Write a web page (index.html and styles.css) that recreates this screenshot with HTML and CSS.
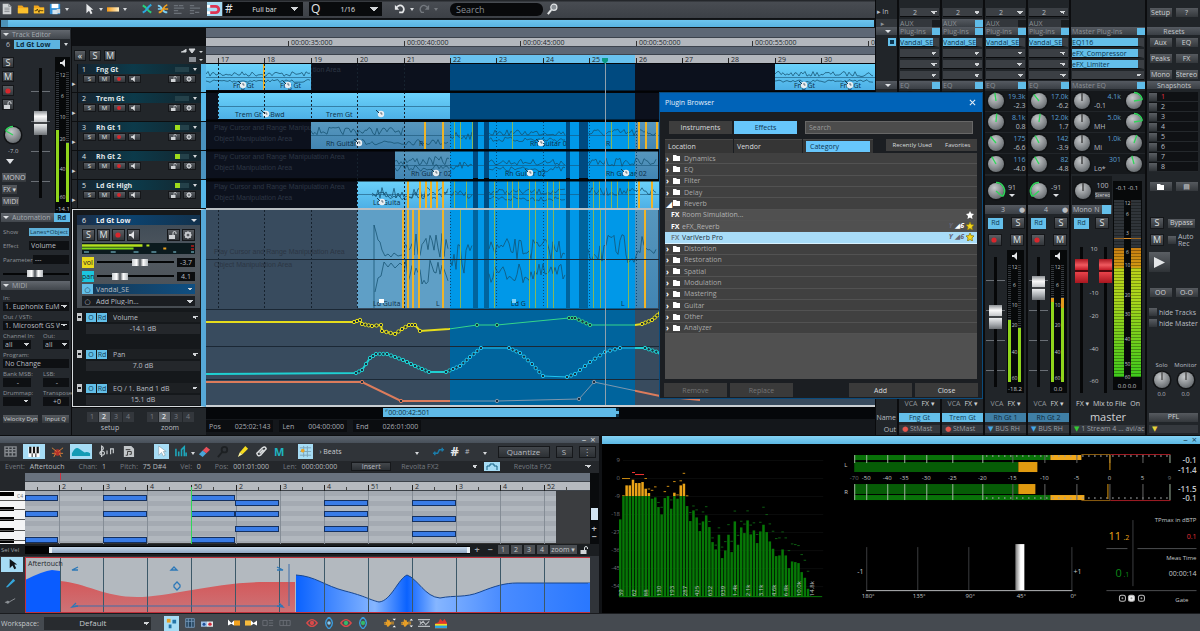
FILE: index.html
```html
<!DOCTYPE html>
<html lang="en">
<head>
<meta charset="utf-8">
<title>Audio Workstation</title>
<link rel="stylesheet" href="styles.css">
</head>
<body>
<svg class="defs" width="0" height="0" aria-hidden="true">
  <defs>
    <radialGradient id="knobFill" cx="40%" cy="30%" r="75%"><stop offset="0" stop-color="#c6c9cb"/><stop offset="1" stop-color="#63686c"/></radialGradient>
    <linearGradient id="clip" x1="0" y1="0" x2="0" y2="1"><stop offset="0" stop-color="#6bd2fa"/><stop offset="1" stop-color="#4db0e6"/></linearGradient>
    <linearGradient id="clipDim" x1="0" y1="0" x2="0" y2="1"><stop offset="0" stop-color="#5797bd"/><stop offset="1" stop-color="#4285b3"/></linearGradient>
    <linearGradient id="level" x1="0" y1="0" x2="0" y2="1"><stop offset="0" stop-color="#c87e12"/><stop offset=".15" stop-color="#d29a12"/><stop offset=".16" stop-color="#b9d21a"/><stop offset=".4" stop-color="#a9d61c"/><stop offset="1" stop-color="#3fc91c"/></linearGradient>
    <linearGradient id="goldBar"><stop offset="0" stop-color="#f59a16"/><stop offset="1" stop-color="#fff0c8"/></linearGradient>
    <symbol id="i-speaker" viewBox="0 0 10 8"><path d="M1 3h2l3-3v8L3 5H1z" fill="#e4e6e8"/></symbol>
    <symbol id="i-gear" viewBox="0 0 10 8"><circle cx="5" cy="4" r="2.4" fill="none" stroke="#c9ccd0" stroke-width="1.6"/><path d="M5 0v8M1 4h8M2 1l6 6M8 1L2 7" stroke="#c9ccd0" stroke-width=".8"/><circle cx="5" cy="4" r="1" fill="#33373c"/></symbol>
    <symbol id="i-lock" viewBox="0 0 10 8"><path d="M1 4h6v4H1z" fill="#d0d3d6"/><path d="M5 4V2a1.5 1.5 0 0 1 3 0v1" fill="none" stroke="#d0d3d6"/></symbol>
    <symbol id="i-rec" viewBox="0 0 10 8"><circle cx="5" cy="4" r="2.6" fill="#d8262c"/></symbol>
    <symbol id="i-folder" viewBox="0 0 8 8"><path d="M0 1h3l1 1h3v5H0z" fill="#fff"/></symbol>
    <symbol id="i-star" viewBox="0 0 10 10"><path d="M5 0l1.5 3.2L10 3.7 7.5 6.2 8.1 10 5 8.2 1.9 10l.6-3.8L0 3.7l3.5-.5z"/></symbol>
    <symbol id="i-wave" viewBox="0 0 12 10"><path d="M0 5l2-1 1 3 1-6 1 8 1-7 1 5 1-3h4M0 6l2 1 1-3 1 5 1-7 1 6 1-4 1 2h4" fill="none" stroke="#f2a526"/></symbol>
  </defs>
</svg>

<div class="upper">
  <main class="main">
    <header class="toolbar">
      <svg class="ico" viewBox="0 0 14 14"><path d="M2 1h7l3 3v9H2z" fill="#cfd2d4"/><path d="M9 1v3h3M4 6h6M4 8h6M4 10h6" fill="none" stroke="#85898d"/></svg>
      <svg class="ico" viewBox="0 0 14 14"><path d="M1 3h5l2 2h5v7H1z" fill="#f2a51c"/><path d="M1 6h12v6H1z" fill="#fbc02d"/></svg>
      <svg class="ico" viewBox="0 0 14 14"><path d="M1 3h5l2 2h5v7H1z" fill="#f2a51c"/><path d="M1 6h12v6H1z" fill="#fbc02d"/><path d="M2 9h2l1-2 2 4 1-3 1 1h3" fill="none" stroke="#4a3206"/></svg>
      <svg class="ico" viewBox="0 0 14 14"><path d="M1 1h12v12H1z" fill="#2f8ed6"/><path d="M3 1h8v5H3z" fill="#fff"/><path d="M4 8h6v5H4z" fill="#d3e4ef"/><path d="M9 7h4v5H9z" fill="#cfd6db"/></svg>
      <i class="caret"></i>
      <svg class="ico gap" viewBox="0 0 14 14"><path d="M4 1v11l3-3 2 4 2-1-2-4h3z" fill="#e8eaec"/></svg>
      <i class="caret"></i>
      <svg class="ico" viewBox="0 0 14 14"><rect y="5" width="14" height="5" fill="url(#goldBar)"/></svg>
      <i class="caret"></i>
      <svg class="ico gap" viewBox="0 0 14 14"><path d="M2 3q3 1 5 4t5 4" fill="none" stroke="#27d07c" stroke-width="2.4"/><path d="M12 2q-3 2-5 5t-5 4" fill="none" stroke="#2ba7df" stroke-width="2.4"/></svg>
      <svg class="ico" viewBox="0 0 14 14"><path d="M1 3q3 0 5 4t6 4M1 7h5" fill="none" stroke="#7cd0f5" stroke-width="2"/><path d="M12 2q-3 1-5 5t-5 4M8 7h5" fill="none" stroke="#f2a11e" stroke-width="2"/></svg>
      <svg class="ico" viewBox="0 0 14 14"><path d="M1 3h5M1 6h12M1 9h5M7 3h5M1 12h9" stroke="#6b7178" stroke-width="1.4"/></svg>
      <svg class="ico" viewBox="0 0 14 14"><path d="M1 3h5M1 6h12M1 9h5M7 11h5M1 12h5" stroke="#6b7178" stroke-width="1.4"/></svg>
      <button class="ico lit" aria-label="Snap"><svg viewBox="0 0 14 14"><path d="M2 4h6a3 3 0 0 1 0 6H2" fill="none" stroke="#dd3453" stroke-width="2.6"/><path d="M0 4h3M0 10h3" stroke="#fff" stroke-width="2.6"/></svg></button>
      <label class="combo"><b>#</b><select aria-label="Grid"><option>Full bar</option></select></label>
      <label class="combo q"><b>Q</b><select aria-label="Quantize"><option>1/16</option></select></label>
      <svg class="ico undo" viewBox="0 0 14 14"><path d="M3 5q4-4 7-1t0 7H6" fill="none" stroke="#e6e8ea" stroke-width="2"/><path d="M1 2v6h5z" fill="#e6e8ea"/></svg>
      <i class="caret"></i>
      <svg class="ico" viewBox="0 0 14 14"><path d="M11 5Q7 1 4 4t0 7h3" fill="none" stroke="#73787e" stroke-width="1.6"/><path d="M13 2v6H8z" fill="#73787e"/></svg>
      <i class="caret dim"></i>
      <input class="search" type="text" placeholder="Search" aria-label="Search">
      <svg class="ico" viewBox="0 0 14 14"><circle cx="8" cy="5" r="3.6" fill="#8a9096" stroke="#dfe2e4" stroke-width="1.4"/><path d="M5 8l-4 5" stroke="#dfe2e4" stroke-width="2.4"/></svg>
    </header>
    <div class="overview"></div>
    <div class="workspace">
      <aside class="inspector">
        <h2 class="bar"><i class="tri"></i>Track Editor</h2>
        <div class="current"><span>6</span><strong>Ld Gt Low</strong><i class="caret"></i></div>
        <div class="channel">
          <div class="chan-buttons">
            <button class="key">S</button><button class="key">M</button>
            <button class="key" aria-label="Record"><svg viewBox="0 0 10 8"><use href="#i-rec"/></svg></button>
            <button class="key" aria-label="Lock"><svg viewBox="0 0 10 8"><use href="#i-lock"/></svg></button>
            <div class="pan" data-knob="-60,1"></div>
            <small>-7.0</small>
            <i class="tri big"></i>
            <button class="tag">MONO</button><button class="tag">FX ▾</button><button class="tag">MIDI</button>
          </div>
          <input class="fader tall" type="range" value="59" aria-label="Track volume">
          <svg class="tmeter" id="track-meter" aria-hidden="true"></svg>
        </div>
        <h2 class="bar"><i class="tri"></i>Automation<em>Rd</em></h2>
        <div class="form auto">
          <label>Show<button class="lit-btn">Lanes+Object</button></label>
          <label>Effect<input value="Volume"></label>
          <label>Parameter<input value="---"></label>
          <input class="hs" type="range" value="48" aria-label="Parameter value">
        </div>
        <h2 class="bar"><i class="tri"></i>MIDI</h2>
        <div class="form midi-form">
          <label class="stack">In:<select><option>1. Euphonix EuMIDI</option></select></label>
          <label class="stack">Out / VSTi:<select><option>1. Microsoft GS Wavetable</option></select></label>
          <div class="pair"><label class="stack">Channel In:<select><option>all</option></select></label><label class="stack">Out:<select><option>all</option></select></label></div>
          <label class="stack">Program:<input value="No Change"></label>
          <div class="pair"><label class="stack">Bank MSB:<input class="c" value="-"></label><label class="stack">LSB:<input class="c" value="-"></label></div>
          <div class="pair"><label class="stack">Drummap:<select><option></option></select></label><label class="stack">Transpose<input class="c" value="+0"></label></div>
          <div class="pair btns"><button class="tag">Velocity Dyn</button><button class="tag">Input Q</button></div>
        </div>
      </aside>

      <section class="tracks">
        <div class="blank"></div>
        <div class="track-tools"><button class="key">«</button><button class="key">S</button><button class="key">M</button>
          <svg viewBox="0 0 24 14"><path d="M1 4h5v-3M9 1h6l-3 4z" fill="#d2d5d8" stroke="#d2d5d8"/><path d="M9 9h7v5H9z" fill="#8a8f95"/><path d="M19 3h4l-2 2zM19 11h4l-2 2z" fill="#d2d5d8"/></svg></div>
        <div id="track-list"></div>
        <div class="sel-track">
          <div class="inner">
            <div class="sel-head"><span>6</span><b>Ld Gt Low</b><i class="tri"></i></div>
            <div class="sel-keys"><button class="key">S</button><button class="key">M</button><button class="key" aria-label="Record"><svg viewBox="0 0 10 8"><use href="#i-rec"/></svg></button><button class="key" aria-label="Monitor"><svg viewBox="0 0 10 8"><use href="#i-speaker"/></svg></button><button class="key push" aria-label="Lock"><svg viewBox="0 0 10 8"><use href="#i-lock"/></svg></button><button class="key" aria-label="Settings"><svg viewBox="0 0 10 8"><use href="#i-gear"/></svg></button></div>
            <svg class="hmeter" viewBox="0 0 114 11" preserveAspectRatio="none"><rect width="114" height="11" fill="#0b1a1e"/><path d="M0 2.5h61" stroke="#b4e01e" stroke-width="2.4"/><path d="M0 5.5h52" stroke="#7fd61a" stroke-width="2"/><path d="M65 2.5h3" stroke="#b4e01e" stroke-width="2"/><path d="M82 5.5h3" stroke="#e8a020" stroke-width="2"/><path d="M110 3h3M110 6h3" stroke="#8a1c1c" stroke-width="2"/><path d="M2 9h5M29 9h5M52 9h5M70 9h5M92 9h3M110 9h3" stroke="#5f97a5" stroke-width="1.4"/></svg>
            <label class="vrow"><span class="y">vol</span><input class="hs" type="range" value="58"><output>-3.7</output></label>
            <label class="vrow"><span class="cy">pan</span><input class="hs" type="range" value="24"><output>4.1</output></label>
            <div class="plug on"><button aria-label="Power">○</button><select aria-label="Plug-in 1"><option>Vandal_SE</option></select></div>
            <div class="plug"><button aria-label="Power">○</button><select aria-label="Plug-in 2"><option>Add Plug-in...</option></select></div>
          </div>
          <div class="lane"><div class="lane-top"><i class="grip"></i><button>O</button><button>Rd</button><select aria-label="Lane 1"><option>Volume</option></select></div><output>-14.1 dB</output></div>
          <div class="lane"><div class="lane-top"><i class="grip"></i><button>O</button><button>Rd</button><select aria-label="Lane 2"><option>Pan</option></select></div><output>7.0 dB</output></div>
          <div class="lane last"><div class="lane-top"><i class="grip"></i><button>O</button><button>Rd</button><select aria-label="Lane 3"><option>EQ /  1. Band 1 dB</option></select></div><output>15.1 dB</output></div>
        </div>
        <div class="setups">
          <div><div class="nums"><button>1</button><button class="on">2</button><button>3</button><button>4</button></div>setup</div>
          <div><div class="nums"><button>1</button><button class="on">2</button><button>3</button><button>4</button></div>zoom</div>
        </div>
      </section>

      <section class="arranger">
        <svg id="timeline"></svg>
        <div class="hscroll"><span>⌜00:00:42:501</span></div>
        <div class="status"><p><span>Pos</span><span>025:02:143</span></p><p><span>Len</span><span>004:00:000</span></p><p><span>End</span><span>026:01:000</span></p></div>
      </section>
    </div>
  </main>
  <aside class="mixer" id="mixer"></aside>
</div>

<div class="lower">
  <section class="midi">
    <div class="win-title"><span>–</span><span>×</span></div>
    <div class="mtools">
      <svg class="ico" viewBox="0 0 14 14"><path d="M1 2h12v10H1zM1 5h12M1 8h12M5 2v10M9 2v10" fill="none" stroke="#85898e" stroke-width="1.5"/></svg>
      <button class="mbtn lit w" aria-label="Piano roll"><svg viewBox="0 0 14 14"><path d="M1 2h12v11H1z" fill="#fff"/><path d="M3 2v7M7 2v7M11 2v7" stroke="#111" stroke-width="2.4"/><path d="M5 9v4M9 9v4" stroke="#111"/></svg></button>
      <svg class="ico" viewBox="0 0 14 14"><circle cx="7" cy="8" r="3.5" fill="#b5312a"/><path d="M1 3l5 4M13 3L8 7M3 13l2-4M11 13L9 9M1 9h3M10 9h3" stroke="#d8863a"/></svg>
      <button class="mbtn lit w" aria-label="Controller"><svg viewBox="0 0 22 14"><path d="M1 12V9q4-8 8-5t6 4q3-1 6 1v3z" fill="#149bb5"/></svg></button>
      <svg class="ico w" viewBox="0 0 20 14"><path d="M4 13V1q4 2 0 5t0 5q4 0 3-3T2 9M10 10V6M14 10V4h3v5" fill="none" stroke="#c9cdd0" stroke-width="1.3"/></svg>
      <svg class="ico" viewBox="0 0 14 14"><path d="M2 1h8l3 3v9H2z" fill="#c3c7ca"/><path d="M4 5h5M6 11V7h4v3M4 11h2M8 10h2" fill="none" stroke="#333"/></svg>
      <button class="mbtn lit push" aria-label="Select"><svg viewBox="0 0 14 14"><path d="M4 1v10l3-3 2 4 2-1-2-4h3z" fill="#fff" stroke="#8094a0" stroke-width=".6"/></svg></button>
      <svg class="ico" viewBox="0 0 14 14"><path d="M1 12V4M4 12V7M7 12V5l3-3v10M12 12V8" stroke="#1ea7bb" stroke-width="1.7" fill="none"/></svg><i class="caret"></i>
      <svg class="ico" viewBox="0 0 14 14"><path d="M1 10l4-4 4 3-4 4z" fill="#49a6d8"/><path d="M5 6l4-4 4 3-4 4z" fill="#e8505b"/></svg>
      <svg class="ico" viewBox="0 0 14 14"><circle cx="8" cy="5" r="3" fill="none" stroke="#1d2023" stroke-width="2"/><path d="M6 7l-5 6" stroke="#1d2023" stroke-width="2"/></svg>
      <svg class="ico" viewBox="0 0 14 14"><path d="M4 8l6-7 3 3-6 6z" fill="#f7dc1e"/><path d="M4 8l3 2-5 3z" fill="#fff6a0"/></svg>
      <svg class="ico" viewBox="0 0 14 14"><path d="M2 9l6-6q3-2 4 1L6 11q-3 2-4-2zM5 9l4-4" fill="none" stroke="#dcdfe1" stroke-width="1.6"/></svg>
      <b class="m">M</b>
      <button class="mbtn lit grid-ic" aria-label="Grid"><svg viewBox="0 0 14 14"><path d="M1 3h12M1 7h12M1 11h12M5 1v12M9 1v12" stroke="#7aa3b8"/><circle cx="4" cy="6" r="2" fill="#e9a529"/></svg></button>
      <span class="beats">› Beats</span><i class="caret"></i>
      <svg class="ico track-ic" viewBox="0 0 14 14"><path d="M1 9h5l2-4h5M3 7v4M11 3v4" stroke="#1c7ba8" stroke-width="1.6" fill="none"/></svg>
      <b>#</b><span class="hash">#</span><i class="caret"></i>
      <button class="flat quant">Quantize</button><button class="flat">S</button><button class="flat">⋮</button>
    </div>
    <div class="minfo">
      <span>Event: <b>Aftertouch</b></span><span>Chan: <b>1</b></span><span>Pitch: <b>75 D#4</b></span><span>Vel: <b>0</b></span><span>Pos: <b>001:01:000</b></span><span>Len: <b>000:00:000</b></span>
      <button class="flat">Insert</button>
      <select aria-label="Instrument"><option>Revolta FX2</option></select><button class="mbtn lit small" aria-label="Editor"><svg viewBox="0 0 14 8"><path d="M2 7V3h3V1h4v2h3v4" fill="none" stroke="#146083"/></svg></button><select aria-label="Output"><option>Revolta FX2</option></select>
    </div>
    <div class="roll">
      <svg class="keys" id="keys"></svg>
      <svg class="notes" id="notes"></svg>
      <div class="vscroll"><i></i><b>+</b><b>−</b></div>
    </div>
    <div class="rollbar"><small>Sel Vel</small><span class="track"><i></i></span><b>+</b><b>−</b><button>1</button><button>2</button><button>3</button><button>4</button><button class="z">zoom ▾</button><svg viewBox="0 0 10 8"><use href="#i-lock"/></svg></div>
    <div class="ctl">
      <div class="ctl-tools"><button class="mbtn lit" aria-label="Select"><svg viewBox="0 0 14 14"><path d="M4 1v10l3-3 2 4 2-1-2-4h3z" fill="#10161b"/></svg></button><svg viewBox="0 0 14 14"><path d="M2 12l8-9 2 2-8 7z" fill="#35a7dd"/></svg><svg viewBox="0 0 14 14"><path d="M1 10h4l7-4" fill="none" stroke="#8b9095"/><circle cx="4" cy="10" r="1.6" fill="#8b9095"/></svg></div>
      <svg class="curve" id="curve"></svg>
    </div>
  </section>
  <section class="analyzer">
    <div class="win-title blue"><span>–</span><span>×</span></div>
    <svg id="scope" viewBox="601 442 598 169"></svg>
  </section>
</div>

<footer class="foot">
  <label for="ws">Workspace:</label><select id="ws"><option>Default</option></select>
  <button class="mbtn lit" aria-label="Arranger view"><svg viewBox="0 0 14 14"><path d="M2 2h4v4H2z" fill="#e6a022"/><path d="M8 3h4v4H8zM4 8h3v4H4z" fill="#2274a8"/></svg></button>
  <svg class="ico" viewBox="0 0 14 14"><path d="M2 2h10v10H2zM2 5h10M5 2v10M9 2v10" fill="#24435c" stroke="#7b9ec0"/></svg>
  <svg class="ico" viewBox="0 0 16 14"><rect y="5" width="8" height="7" fill="#9fc2e8"/><rect x="8" y="5" width="8" height="7" fill="#e5e7e9"/><circle cx="4" cy="8.500" r="2" fill="#204f99"/><circle cx="12" cy="8.500" r="2.300" fill="#d62b3a"/></svg>
  <svg class="ico gap" viewBox="0 0 14 14"><path d="M0 3l4 4 3-3v6l-3-2-4 2z" fill="#fff"/><path d="M7 4h7v6H7z" fill="#f2a11e"/></svg>
  <svg class="ico" viewBox="0 0 14 14"><path d="M0 4h7v6H0z" fill="#f7bb3d"/><path d="M7 4l3 3 4-3v6l-4-2-3 2z" fill="#fff"/></svg>
  <svg class="ico" viewBox="0 0 14 14"><path d="M1 4h5v6H1zM8 4h5M8 7h5M8 10h5" fill="none" stroke="#6d7278"/></svg>
  <svg class="ico" viewBox="0 0 14 14"><path d="M1 4h12v6H1zM5 4v6M9 4v6" fill="none" stroke="#6d7278"/></svg>
  <svg class="ico gap" viewBox="0 0 14 14"><path d="M1 7q6-8 12 0-6 8-12 0z" fill="none" stroke="#d84a4a" stroke-width="1.6"/><circle cx="7" cy="7" r="2.500" fill="#d84a4a"/></svg>
  <svg class="ico" viewBox="0 0 14 14"><path d="M7 0q8 7 0 14Q-1 7 7 0z" fill="none" stroke="#3a9bdc" stroke-width="1.6"/><circle cx="7" cy="7" r="2" fill="#8ccdf2"/></svg>
  <svg class="ico" viewBox="0 0 14 14"><path d="M1 7q6-8 12 0-6 8-12 0z" fill="none" stroke="#d84a4a" stroke-width="1.6"/><circle cx="7" cy="7" r="2.500" fill="#36b86a"/></svg>
  <svg class="ico" viewBox="0 0 14 14"><path d="M7 0q8 7 0 14Q-1 7 7 0z" fill="none" stroke="#3a9bdc" stroke-width="1.6"/><circle cx="7" cy="7" r="2.500" fill="#36b86a"/></svg>
  <svg class="ico gap" viewBox="0 0 14 14"><use href="#i-wave" y="2" width="12" height="10"/><path d="M10 2h4l-2 2zM10 12h4l-2-2z" fill="#fff"/></svg>
  <svg class="ico" viewBox="0 0 14 14"><use href="#i-wave" y="2" width="12" height="10"/><path d="M10 4h4l-2-2zM10 10h4l-2 2z" fill="#fff"/></svg>
  <svg class="ico" viewBox="0 0 14 14"><path d="M0 3h14M0 11h14M2 9l4-4 3 4 4-4M2 5l4 4" fill="none" stroke="#b9bdc1" stroke-width="1.3"/></svg>
  <svg class="ico" viewBox="0 0 14 14"><path d="M0 13V8l4-2 2-4 3 3 2-3 3 5v6z" fill="#e0362c"/><path d="M0 13V8h14v5z" fill="#f5dc1f"/><path d="M0 13v-3h14v3z" fill="#2aa4e0"/></svg>
</footer>

<div class="dialog" role="dialog" aria-labelledby="dlg-title">
  <header><h1 id="dlg-title">Plugin Browser</h1><button class="x" aria-label="Close dialog"><svg viewBox="0 0 8 8"><path d="M1 1l6 6M7 1L1 7" stroke="#e4eef7" stroke-width="1.2"/></svg></button></header>
  <div class="tabs"><button>Instruments</button><button class="on">Effects</button><input type="text" placeholder="Search" aria-label="Search plug-ins"></div>
  <div class="heads"><button>Location</button><button>Vendor</button><button class="cat"><span>Category</span></button><div><button>Recently Used</button><button>Favorites</button></div></div>
  <div class="listbox"><ul id="plugins"></ul></div>
  <div class="actions"><button disabled>Remove</button><button disabled>Replace</button><span></span><button>Add</button><button>Close</button></div>
</div>
<script src="app.js"></script>
</body>
</html>
```
FILE: styles.css
```css
* { box-sizing: border-box; margin: 0; padding: 0; }
body { min-height: 100vh; display: flex; flex-direction: column; position: relative; background: #17191d; color: #b9bdc2; font: 7px/1 "Open Sans", "DejaVu Sans", sans-serif; overflow: hidden; }
button, input, select, output { font: inherit; color: inherit; border: 0; border-radius: 0; background: none; min-width: 0; }
select, input { appearance: none; }
h2 { font-size: 7px; font-weight: 400; }
svg { display: block; }
svg text { font-family: "Open Sans", sans-serif; font-size: 7px; }
i { font-style: normal; }
.defs { position: absolute; }

select { background-image: linear-gradient(45deg, transparent 50%, #d0d3d6 50%), linear-gradient(-45deg, transparent 50%, #d0d3d6 50%); background-size: 3px 3px; background-position: right 5px center, right 2px center; background-repeat: no-repeat; padding-right: 9px; overflow: hidden; white-space: nowrap; text-overflow: clip; }
.caret { width: 0; height: 0; border: 2px solid transparent; border-top: 3px solid #d5d8db; border-bottom: 0; flex: none; }
.tri { width: 0; height: 0; border: 3px solid transparent; border-top: 3px solid #dfe2e5; border-bottom: 0; flex: none; }
.tri.big { border-width: 4px; border-top-width: 5px; border-bottom: 0; margin: 8px 0; }
.dim { opacity: .35; }

.upper { display: flex; flex: 1; }
.main { flex: 1; min-width: 0; display: flex; flex-direction: column; }

/* toolbar */
.toolbar { height: 19px; display: flex; align-items: center; gap: 4px; padding-left: 1px; background: linear-gradient(#24272b 0 1px, #484c52 2px, #3c4046); border-bottom: 1px solid #101215; }
.ico { width: 12px; height: 12px; flex: none; }
.ico.gap { margin-left: 10px; }
.ico.undo { margin-left: 8px; }
.lit { background: #a6dcf5; }
button.ico.lit { width: 15px; height: 14px; margin-left: 2px; }
.combo { display: flex; align-items: center; gap: 4px; height: 14px; width: 80px; margin-left: -3px; padding: 0 2px; background: #090b0d; color: #e2e4e6; }
.combo b { font-size: 12px; font-weight: 400; }
.combo select { flex: 1; height: 12px; text-align-last: center; background-size: 4px 4px; background-position: right 6px center, right 2px center; }
.combo.q { width: 73px; margin-left: 2px; }
.search { width: 93px; height: 13px; border-radius: 6px; padding: 0 6px; margin-left: 8px; background: #08090b; font-size: 9px; color: #8d9298; }
::placeholder { color: #868b91; opacity: 1; }
.overview { height: 9px; background: linear-gradient(#6cc4ee, #58b2e0); border: 1px solid #14171a; box-shadow: inset 7px 0 #4c92b8; }

.workspace { display: flex; flex: 1; background: #1c1f23; }

/* inspector */
.inspector { flex: 0 0 72px; width: 72px; min-width: 0; padding: 2px 1px 0; border-right: 1px solid #0c0d0f; background: #24282d; display: flex; flex-direction: column; }
.bar { height: 9px; display: flex; align-items: center; gap: 3px; padding-left: 2px; background: linear-gradient(#62676e, #41464c); color: #a6abb1; }
.bar em { margin-left: auto; width: 18px; height: 9px; background: #5fb9e6; color: #12364c; font-style: normal; font-weight: 700; text-align: center; line-height: 9px; }
.current { height: 11px; display: flex; align-items: center; gap: 4px; padding-left: 5px; }
.current strong { width: 46px; height: 9px; line-height: 9px; background: #5db4e0; color: #0d2c40; padding-left: 2px; }
.channel { height: 163px; display: flex; padding: 7px 0 0 1px; }
.chan-buttons { width: 24px; display: flex; flex-direction: column; align-items: flex-start; gap: 3px; flex: none; }
.chan-buttons .pan { margin: 12px 0 0; }
.chan-buttons small { font-size: 6px; padding-left: 6px; }
.key { width: 12px; height: 11px; font-size: 9px; line-height: 10px; color: #dfe1e3; background: linear-gradient(#5a5e63, #33373b); border: 1px solid #15171a; flex: none; }
.key svg { width: 10px; height: 8px; }
.chan-buttons .tri.big { margin: 2px 4px 6px; }
.tag { height: 9px; line-height: 8px; padding: 0 2px; font-size: 7px; background: linear-gradient(#565a5f, #34383c); color: #cfd2d5; white-space: nowrap; overflow: hidden; }
.chan-buttons .tag { padding: 0 1px; }
.fader { writing-mode: vertical-lr; direction: rtl; width: 19px; background: linear-gradient(#060708, #060708) center/3px 100% no-repeat, repeating-linear-gradient(transparent 0 23px, #6a6f75 23px 24px, transparent 24px 30px) center/17px 100%; }
.fader::-webkit-slider-thumb { appearance: none; width: 13px; height: 24px; background: linear-gradient(#8e9296, #fafafa 22%, #c4c7ca 46%, #3c3f42 48% 52%, #eceeef 54%, #a9adb1 80%, #6f7377); }
.fader.tall { height: 130px; margin: 11px 1px 0 5px; }
.tmeter { width: 15px; height: 156px; flex: none; margin-left: auto; }
.form label { display: flex; align-items: center; justify-content: space-between; color: #8f949a; font-size: 6px; }
.form input:not(.hs), .form select { height: 9px; font-size: 7px; color: #b9bdc2; background-color: #0e1013; padding-left: 2px; width: 100%; }
.auto { height: 59px; padding: 6px 1px 0 2px; display: flex; flex-direction: column; gap: 5px; }
.form.auto label input { width: 40px; }
.lit-btn { width: 40px; height: 8px; font-size: 6px; background: #5fb0d8; color: #143a50; line-height: 8px; overflow: hidden; }
.midi-form { padding: 5px 1px 0 2px; display: flex; flex-direction: column; gap: 3px; }
.form label.stack { flex-direction: column; align-items: stretch; gap: 0; line-height: 7px; white-space: nowrap; min-width: 0; }
.pair { display: grid; grid-template-columns: 28px 26px; justify-content: space-between; }
.form .c { text-align: center; }
.pair.btns { grid-template-columns: 35px 27px; padding-top: 6px; }
.pair.btns .tag { font-size: 6px; padding: 0; height: 8px; }
.hs { height: 9px; width: 100%; background: linear-gradient(#050607, #050607) center/100% 2px no-repeat; }
.hs::-webkit-slider-thumb { appearance: none; width: 16px; height: 7px; background: linear-gradient(90deg, #c9cdd0, #fff 30%, #5c6166 48% 52%, #fff 70%, #b3b8bc); }

/* track list */
.tracks { flex: 0 0 134px; width: 134px; min-width: 0; background: #23272b; display: flex; flex-direction: column; }
.blank { height: 18px; background: #0e1013; }
.track-tools { height: 18px; display: flex; align-items: center; gap: 3px; padding: 0 2px; }
.track-tools svg { width: 24px; height: 14px; margin-left: auto; }
.trk { height: 29px; display: grid; grid-template-columns: 5px 1fr 5px; border-bottom: 1px solid #0c0e10; }
.trk .body { background: #22262a; border-left: 1px solid #0c0e10; }
.trk .head { height: 10px; display: flex; align-items: center; gap: 10px; padding: 0 4px; background: linear-gradient(90deg, #16232f, #0c3a4a 45%, #13242c); color: #dfe3e6; }
.trk .head .lev { margin-left: auto; width: 14px; height: 5px; background: #24414a; border-left: 5px solid #24414a; }
.trk .head .lev.g { border-left-color: #9ddc1c; }
.trk .head .caret { margin-left: -6px; }
.trk .row { display: flex; gap: 2px; padding: 1px 5px; }
.trk .row .key { width: 13px; height: 8px; font-size: 6px; line-height: 6px; }
.trk .row .key svg { width: 10px; height: 6px; }
.push { margin-left: auto !important; }
.strip-c { background: #57b8ea; }
.trk.d .strip-c { background: #4a93c0; }
.trk .arrow { color: #cfd2d5; align-self: center; padding-top: 10px; }
.sel-track { border: 1px solid #d7dbde; border-right: 5px solid #57a9d8; padding: 5px 1px 0 4px; height: 198px; background: #15181b; }
.inner { background: linear-gradient(#3c4955, #525960 50%, #464c52); padding: 0 5px 2px; display: flex; flex-direction: column; gap: 2px; }
.sel-head { height: 10px; margin: 0 -5px; padding: 0 3px 0 5px; display: flex; align-items: center; gap: 10px; background: linear-gradient(90deg, #1b2c44, #0c4471 40%, #12314c); color: #eceef0; }
.sel-head .tri { margin-left: auto; }
.sel-keys { display: flex; gap: 2px; padding-top: 2px; }
.sel-keys .key { width: 13px; height: 12px; }
.hmeter { width: 100%; height: 11px; }
.vrow { display: flex; align-items: center; gap: 3px; height: 12px; }
.vrow span { width: 12px; height: 11px; line-height: 11px; text-align: center; color: #222; flex: none; }
.y { background: #e9d91c; } .cy { background: #1cc6de; }
.vrow output { width: 18px; height: 9px; line-height: 9px; background: #0b0d0f; text-align: center; flex: none; }
.plug { display: flex; height: 10px; background: #1a1d21; }
.plug button { width: 11px; }
.plug select { flex: 1; padding-left: 3px; }
.plug.on { background: linear-gradient(90deg, #173650, #0f4f82); }
.plug.on button { background: #63bfe8; color: #123; }
.lane { height: 37px; padding-top: 4px; display: flex; flex-direction: column; gap: 2px; }
.lane.last { height: 30px; padding-top: 1px; }
.lane-top { display: flex; gap: 1px; height: 10px; align-items: center; }
.lane-top button { width: 10px; height: 9px; line-height: 9px; background: #63bfe8; color: #12405c; }
.lane-top select { flex: 1; height: 10px; padding-left: 5px; background-color: #1d2023; }
.grip { width: 5px; height: 8px; margin-right: 3px; border: 1px solid #c5c8cb; border-top-width: 3px; border-bottom-width: 3px; }
.lane output { height: 10px; margin-left: 9px; line-height: 10px; text-align: center; background: #24272b; }
.setups { flex: 1; display: flex; justify-content: space-around; align-items: center; border-top: 1px solid #0b0c0e; text-align: center; padding: 0 6px 0 8px; }
.nums { display: flex; gap: 1px; margin-bottom: 2px; }
.nums button { width: 11px; height: 10px; background: #33373c; color: #777c82; }
.nums .on { background: #666b71; color: #fff; }

/* arranger */
.arranger { flex: 1; min-width: 0; background: #14171b; overflow: hidden; }
#timeline { width: 100%; height: 379px; }
.hscroll { height: 12px; background: #05070a; padding: 1px 0 2px 177px; }
.hscroll span { display: block; width: 236px; height: 9px; line-height: 9px; background: #5fb9e6; color: #0e3044; padding-left: 2px; border-right: 3px dotted #0e3044; }
.status { display: flex; gap: 6px; padding: 1px 0 0; }
.status p { display: flex; gap: 14px; height: 12px; align-items: center; padding: 0 3px; background: #0b0d10; color: #a7abb0; }
svg .ghost { fill: #2c3644; font-family: "Liberation Sans", sans-serif; }
.clabel { fill: #0d2e47; }
.rl { fill: #23272d; }
.wv { fill: none; stroke: #14506f; stroke-width: 1; opacity: .75; }

/* mixer */
.mixer { flex: 0 0 325px; display: grid; grid-template-columns: 23px repeat(4, 43px) 76px 1fr; background: #1d2024; border-left: 1px solid #090a0c; }
.strip { display: grid; grid-template-columns: minmax(0, 1fr); grid-template-rows: 17px 10px 8px 46px 8px 87px 29px 9px 18px 15px 1fr 12px 15px 10px; border-right: 2px solid #0b0c0e; background: #212529; overflow: hidden; min-width: 0; }
.strip > * { min-width: 0; }
.s-in { padding: 8px 1px 0; }
.s-in select, .slot { width: 100%; height: 9px; background-color: #3b3f44; border-bottom: 1px solid #0b0c0e; text-align-last: center; }
.hd { display: flex; justify-content: space-between; align-items: center; padding-left: 1px; background: linear-gradient(#555a61, #3a3f45); color: #8b9096; height: 8px; align-self: end; white-space: nowrap; }
.hd.dk { background: #33373c; }
.hd i { width: 8px; height: 7px; background: #60bce8; flex: none; }
.hd .tri { width: 0; height: 0; background: none; margin-left: 8px; }
.hd.dk i { background: #1a1c1f; }
.hd.ct { justify-content: center; color: #c0c4c8; }
.slots { display: flex; flex-direction: column; gap: 2px; padding: 3px 1px 0; }
.slot { display: block; height: 9px; padding-left: 1px; text-align-last: left; }
.slot.on { background-color: #64bfea; color: #0d3650; border-right: 6px solid #3b3f44; background-image: none; padding: 0; }
.power { width: 8px; height: 8px; margin-left: 11px; background: #0d3650; border: 2px solid #64bfea; }
.side-lbl { text-align: right; align-self: center; padding-right: 1px; }
.eqs { display: grid; grid-template-rows: repeat(4, 20px); gap: 1px; padding-top: 2px; }
.eq, .panrow { display: flex; align-items: center; gap: 1px; background: #15181b; }
.eq > div:first-child, .pan { width: 22px; height: 20px; flex: none; }
.eq p { flex: 1; min-width: 0; text-align: right; line-height: 9px; padding-right: 1px; white-space: nowrap; }
.eq p b { font-weight: 400; color: #5a9fd4; display: block; }
.eq p.l { text-align: left; }
.eq p.l b { text-align: right; }
.panrow p { display: flex; flex-direction: column; gap: 3px; align-items: center; min-width: 0; }
.panrow .tag { font-size: 5px; padding: 0; height: 7px; line-height: 7px; }
.num { background: linear-gradient(#555a61, #3a3f45); text-align: center; line-height: 9px; display: flex; justify-content: space-between; padding: 0 1px 0 16px; align-items: center; }
.num.mono { padding-left: 1px; }
.num.mono i { width: 9px; height: 9px; background: #64bfea; }
.duo { display: flex; align-items: center; gap: 8px; padding-left: 3px; min-width: 0; }
.duo .key { width: 14px; height: 12px; }
.rd { width: 15px; height: 11px; background: #64bfea; color: #123c56; line-height: 10px; flex: none; }
.fz { display: flex; gap: 1px; padding: 3px 2px 3px 1px; }
.fz .fader { margin: 7px 0 0; height: 130px; width: 19px; }
.fz svg { width: 17px; height: 143px; margin-left: auto; }
.vga { display: flex; gap: 4px; align-items: center; justify-content: center; color: #8f9499; white-space: nowrap; }
.vga b { font-weight: 400; color: #cdd0d3; }
.vga.mr { grid-row: 12; }
.nm { align-self: center; height: 9px; line-height: 9px; text-align: center; background: #64bfea; color: #0f3a54; }
.nm.d { background: #3f7fa6; color: #0d2738; }
.out { height: 8px; line-height: 8px; background: #35393e; color: #999ea4; white-space: nowrap; overflow: hidden; padding-left: 3px; }
.out::before { content: "● "; color: #e2574e; }
.out.b::before { content: "▼ "; color: #45a6e4; }
.out.g::before { content: "▼ "; color: #36c936; }
.out.yl::before { content: "▼ "; color: #e6d23a; }
.master .fader { width: 13px; margin: 0; height: 146px; background: linear-gradient(#060708, #060708) center/3px 100% no-repeat; }
.master .fader::-webkit-slider-thumb { background: linear-gradient(#a8161f, #f05a60 25%, #c41c28 45%, #4a070b 48% 52%, #e8424a 55%, #a8161f); }
.mbody { grid-row: 7 / 12; display: flex; justify-content: space-between; padding: 0 3px 2px 1px; }
.mleft { width: 40px; display: grid; grid-template-columns: 40px; grid-template-rows: 29px 9px 18px 15px 1fr; }
.mleft .duo { gap: 6px; padding-left: 2px; }
.mleft .mf { display: flex; justify-content: space-between; padding: 0 0 0 3px; }
.mleft .mf svg { width: 8px; height: 146px; overflow: visible; }
.mbody > svg { width: 29px; height: 214px; }
.mname { font-size: 11px; line-height: 13px; text-align: center; color: #d0d3d6; }
.side { border-right: 0; padding: 0 2px; }
.side .hd { margin: 0 -2px; }
.g2 { display: grid; grid-template-columns: 22px 22px; gap: 4px; align-content: start; justify-content: center; }
.g2 .tag { padding: 0; }
.side .g2.top { padding-top: 8px; }
.side .g2.rs { padding-top: 3px; row-gap: 7px; }
.side .g2.fl { padding-top: 6px; }
.snaps { display: grid; grid-template-rows: repeat(8, 10px); padding-top: 3px; }
.snaps label, .chk { display: flex; align-items: center; gap: 2px; }
.chk { white-space: nowrap; }
.chk.two { white-space: normal; }
.snaps label { background: #0f1114; border-bottom: 1px solid #24282c; gap: 4px; }
.snaps input, .chk input { width: 8px; height: 8px; background: linear-gradient(#5a5e63, #303438); flex: none; }
.snaps label:first-child { color: #e03040; }
.side .duo { padding: 0 0 0 1px; gap: 4px; }
.tools { display: flex; flex-direction: column; gap: 3px; padding-top: 5px; }
.play { width: 21px; height: 20px; background: linear-gradient(#5a5e63, #2f3337); padding: 4px 5px; margin-bottom: 13px; flex: none; }
.tools .g2 { margin-bottom: 8px; }
.tools .g2.kn { margin: 32px 0 0; justify-items: center; text-align: center; gap: 2px; }
.kn span { font-size: 6px; }
.pfl { align-self: center; }

/* lower area */
.lower { display: flex; height: 178px; }
.midi { flex: 1; min-width: 0; border-right: 3px solid #101215; background: #212428; display: flex; flex-direction: column; }
.win-title { height: 8px; background: linear-gradient(#5d6670, #48505a); display: flex; justify-content: flex-end; gap: 4px; padding-right: 3px; font-size: 9px; line-height: 7px; color: #d5d8da; border-top: 1px solid #0c0e10; }
.win-title.blue { height: 9px; background: linear-gradient(#84d2f4, #5cb8e4); color: #1d4358; }
.mtools { height: 18px; display: flex; align-items: center; gap: 6px; padding: 0 3px 0 4px; background: #303439; }
.mtools .ico { width: 13px; height: 13px; }
.mtools .ico.w { width: 18px; }
.mtools .track-ic { margin-left: 10px; }
.mbtn { width: 15px; height: 15px; flex: none; display: grid; place-items: center; }
.mbtn svg { width: 13px; height: 13px; }
.mbtn.w { width: 22px; }
.mtools .push { margin-left: 13px !important; }
.mbtn.w svg { width: 20px; }
.mtools .caret { margin: 4px -3px 0; }
.m { color: #1fb4c0; font-size: 11px; }
.mtools > b:not(.m) { font-size: 13px; color: #e4e6e8; }
.beats { flex: 1; color: #c9ccd0; }
.grid-ic { margin-left: 8px; }
.hash { margin-right: 10px; }
.flat { height: 12px; width: 17px; background: linear-gradient(#43474c, #2c3034); border: 1px solid #16181b; color: #b7bbc0; font-size: 8px; line-height: 9px; }
.flat.quant { width: 52px; margin-left: 8px; }
.minfo { height: 12px; display: flex; align-items: center; gap: 14px; padding-left: 5px; color: #747a80; background: #24272b; white-space: nowrap; }
.minfo b { font-weight: 400; color: #b5b9be; padding-left: 3px; }
.minfo .flat { width: 40px; height: 9px; line-height: 7px; font-size: 7px; margin: 0 -4px 0 0; }
.minfo select { flex: 1; height: 10px; margin-right: -10px; }
.minfo select:last-child { margin-right: 6px; }
.mbtn.small { width: 16px; height: 9px; }
.mbtn.small svg { width: 14px; height: 8px; }
.roll { display: flex; height: 71px; }
.keys { width: 25px; height: 71px; flex: none; }
.notes { flex: 1; min-width: 0; height: 71px; }
.vscroll { width: 9px; background: #090b0d; display: flex; flex-direction: column; align-items: center; font-size: 9px; line-height: 8px; flex: none; }
.vscroll i { width: 7px; height: 12px; background: #d0e2f0; margin: 35px 0 5px; flex: none; }
.rollbar { height: 12px; display: flex; align-items: center; gap: 2px; color: #9ea3a8; background: #1b1e21; padding-right: 9px; }
.rollbar small { width: 23px; font-size: 6px; flex: none; white-space: nowrap; padding-left: 1px; }
.track { flex: 1; height: 8px; background: #020304; padding: 1px 0 1px 24px; }
.track i { display: block; height: 6px; background: linear-gradient(#c5d7ea, #8ea6c2); border: 1px solid #e8f0f6; border-width: 0 3px; }
.rollbar b { width: 11px; text-align: center; font-size: 9px; }
.rollbar button { width: 11px; height: 9px; background: #4a4e53; color: #c3c6ca; line-height: 8px; }
.rollbar .z { width: 27px; white-space: nowrap; overflow: hidden; }
.rollbar svg { width: 11px; height: 8px; }
.ctl { flex: 1; display: flex; padding: 1px 9px 0 0; background: #303439; }
.ctl-tools { width: 25px; flex: none; display: flex; flex-direction: column; gap: 4px; padding-left: 1px; }
.ctl-tools .mbtn { width: 22px; }
.ctl-tools > svg { width: 13px; height: 13px; margin-left: 3px; }
.curve { flex: 1; min-width: 0; height: 56px; }
.analyzer { flex: 1; min-width: 0; background: #000; }
#scope { width: 100%; }
.tw { fill: #c4c7ca; } .tdim { fill: #6f7377; } .end { text-anchor: end; } .mid { text-anchor: middle; }
.foot { height: 20px; display: flex; align-items: center; gap: 5px; padding-left: 1px; background: linear-gradient(#454a50 0 17px, #15171a 18px); border-top: 1px solid #1a1c1f; color: #c4c8cb; }
.foot > select { width: 107px; height: 13px; background-color: #282b2f; font-size: 8px; text-align-last: center; margin-right: 8px; }

/* plug-in browser */
.dialog { position: absolute; left: 659px; top: 92px; width: 324px; height: 307px; border: 1px solid #0b4b7c; background: #1b1e22; display: flex; flex-direction: column; padding: 0 5px; color: #d9dcdf; }
.dialog header { height: 19px; margin: 0 -5px 9px; padding: 0 6px 0 5px; background: #0063b8; display: flex; align-items: center; justify-content: space-between; }
.dialog h1 { font-size: 7px; font-weight: 400; color: #e2effa; }
.x svg { width: 7px; height: 7px; }
.tabs { display: grid; grid-template-columns: 63px 63px 1fr; gap: 2px; height: 13px; padding: 0 4px 0 4px; }
.tabs button { background: #3d3d3d; }
.tabs .on { background: #67c6fb; color: #0d3450; }
.tabs input { margin-left: 6px; background: #4c4c4c; border: 1px solid #676767; padding: 0 3px; }
.dialog ::placeholder { color: #9a9a9a; }
.heads { display: flex; height: 14px; margin-top: 5px; gap: 1px; }
.heads > button { width: 68px; background: #353535; text-align: left; padding-left: 3px; border-top: 1px solid #484848; }
.heads .cat { width: 70px; padding: 1px 3px; }
.heads .cat span { display: block; height: 11px; line-height: 11px; background: #67c6fb; color: #0d3450; padding-left: 4px; }
.heads div { margin-left: auto; width: 91px; height: 12px; display: flex; justify-content: space-around; background: #3d3d3d; }
.heads div button { white-space: nowrap; font-size: 6px; }
.listbox { flex: 1; background: #505050; }
#plugins { list-style: none; height: 181px; display: grid; grid-auto-rows: 1fr; }
#plugins li { display: flex; align-items: center; gap: 3px; padding-left: 1px; background: #404040; border-bottom: 1px solid #525252; color: #a9a9a9; }
#plugins li.fx { background: #505050; padding-left: 6px; color: #b3b3b3; gap: 2px; }
#plugins li.sel { background: #a8dcf8; color: #22313a; border-color: #d8f2ff; }
#plugins i { width: 4px; color: #fff; font-size: 8px; line-height: 7px; font-weight: 700; }
#plugins svg { width: 8px; height: 8px; }
#plugins b { width: 9px; color: #fff; font-size: 7px; }
#plugins .sel b { color: #71838f; }
#plugins .stars { margin-left: auto; display: flex; gap: 2px; padding-right: 3px; }
#plugins .stars em { color: #fff; font-weight: 700; }
#plugins .sel .stars em, #plugins .stars em:first-child { color: #667; }
.actions { height: 14px; margin: 4px -1px 1px; display: grid; grid-template-columns: 63px 63px 1fr 63px 63px; gap: 3px; }
.actions button { background: #3a3a3a; }
.actions button:disabled { color: #757575; }
```
FILE: app.js
```js
const $ = id => document.getElementById(id);
const rect = (x, y, w, h, f) => `<rect x="${x}" y="${y}" width="${w}" height="${h}" fill="${f}"/>`;
const text = (x, y, s, c = 'tw', a = '') => `<text x="${x}" y="${y}" class="${c}" ${a}>${s}</text>`;
const line = (d, c, a = '') => `<path d="${d}" stroke="${c}" fill="none" ${a}/>`;
let seed = 7;
const rnd = () => (seed = (seed * 16807) % 2147483647) / 2147483647;

// Rotary knob: angle in degrees from 12 o'clock, optional lit arc
function knob(angle, arc, colour = '#2fd65a') {
  const r = angle * Math.PI / 180;
  const px = 11 + 8.5 * Math.sin(r), py = 10 - 8.5 * Math.cos(r);
  return `<svg viewBox="0 0 22 20" width="22" height="20"><circle cx="11" cy="10" r="9.500" fill="#101214"/><circle cx="11" cy="10" r="8" fill="url(#knobFill)"/>` +
    (arc ? line(`M11 1.500A8.500 8.500 0 0 ${angle > 0 ? 1 : 0} ${px} ${py}`, colour, 'stroke-width="1.6"') : '') +
    line(`M11 10L${px} ${py}`, colour, 'stroke-width="1.3"') + '</svg>';
}
document.querySelectorAll('[data-knob]').forEach(e => {
  const [a, b] = e.dataset.knob.split(',').map(Number);
  e.innerHTML = knob(a, b);
});

// Vertical channel meter: tops of left and right level
function meter(top1, top2, h, value, hot) {
  let s = rect(0, 0, 17, h, '#07090a') + `<use href="#i-speaker" x="4" y="2" width="10" height="8"/>`;
  for (let y = 15; y < h - 12; y += 2) s += rect(1, y, 3, 1, '#363b40') + rect(11, y, 3, 1, '#363b40');
  s += rect(1, top1, 3, h - 11 - top1, '#8fd51c') + rect(11, top2, 3, h - 11 - top2, '#8fd51c');
  if (hot) s += rect(11, top2, 3, 10, '#e39a1c') + rect(1, top1, 3, 4, '#e39a1c');
  [['12', .13], ['6', .26], ['10', .4], ['20', .54], ['40', .73], ['60', .91]].forEach(([l, f]) => s += text(7.5, Math.round(h * f), l, 'tw mid', 'style="font-size:5px"'));
  return s + text(8, h - 2, value, 'tw mid', 'style="font-size:6px"');
}
$('track-meter').innerHTML = meter(73, 86, 156, '-14.1');

// Track headers
$('track-list').innerHTML = [['Fng Gt', 0], ['Trem Gt', 0], ['Rh Gt 1', 1], ['Rh Gt 2', 1], ['Ld Gt High', 1]].map(([n, g], i) => {
  const k = (ic, cls = '') => `<button class="key ${cls}" aria-label="${ic}"><svg viewBox="0 0 10 8"><use href="#i-${ic}"/></svg></button>`;
  return `<div class="trk ${i == 2 || i == 3 ? 'd' : ''}"><span class="arrow">▸</span><div class="body"><div class="head"><span>${i + 1}</span><b>${n}</b><span class="lev ${g ? 'g' : ''}"></span><i class="caret"></i></div>
  <div class="row"><button class="key">S</button><button class="key">M</button>${k('rec')}${k('speaker')}${k('lock', 'push')}${k('gear')}</div></div><span class="strip-c"></span></div>`;
}).join('');

// Timeline
(() => {
  let s = rect(206, 28, 2000, 9, '#5d6775') + rect(206, 37, 2000, 9, '#b3b7bd') + rect(206, 46, 2000, 8, '#5d6775') + rect(206, 54, 2000, 9, '#b3b7bd');
  s += rect(450, 54, 185, 9, '#69c2ef') + line('M206 37.500h2000M206 46.500h2000M206 54.500h2000', '#3c434d');
  for (let i = 0; i < 6; i++) s += line(`M${288.5 + i * 116} 41v5`, '#333') + text(291 + i * 116, 45, '00:00:' + (35 + i * 5) + ':000', 'rl');
  for (let b = 17; b < 31; b++) { const x = Math.round(218 + (b - 17) * 46.4); s += line(`M${x + .5} 58v5`, '#222') + text(x + 3, 62, b, 'rl'); }
  s += rect(206, 63, 2000, 146, '#05070b');
  const rows = [64, 93, 122, 151, 181];
  const play = ['', '', 'Play Cursor and Range Manipul', 'Play Cursor and Range Manipulation Area', 'Play Cursor and Range Manipulation Area'];
  rows.forEach((y, i) => {
    s += rect(206, y, 2000, 27, '#0c111d');
    if (play[i]) s += text(214, y + 8, play[i], 'ghost') + text(214, y + 19, 'Object Manipulation Area', 'ghost');
    s += rect(450, y, 185, 27, '#004a80');
  });
  s += text(313, 72, 'tion Area', 'ghost');
  s += rect(206, 210, 2000, 196, '#384b5e') + text(214, 254, 'Play Cursor and Range Manipulation Area', 'ghost') + text(214, 267, 'Object Manipulation Area', 'ghost');
  s += rect(450, 210, 185, 196, '#00649d');
  const clip = (x, y, w, h, f) => { s += rect(x, y, w, h, f) + line(`M${x} ${y + Math.floor(h / 2)}.5h${w}`, '#1b5474', 'opacity=".6"'); };
  const wave = (x0, x1, y, amp) => {
    let d = `M${x0} ${y}`;
    for (let x = x0 + 2; x < x1; x += 2) d += `L${x} ${(y + (rnd() - .5) * amp).toFixed(1)}`;
    s += `<path class="wv" d="${d}"/>`;
  };
  clip(206, 64, 105, 26, 'url(#clip)'); wave(206, 311, 74, 5); wave(206, 311, 81, 3);
  clip(775, 64, 200, 26, 'url(#clip)'); wave(775, 875, 74, 5); wave(775, 875, 81, 3);
  [233, 280, 794, 840].forEach(x => s += text(x, 88, 'Fng Gt', 'clabel'));
  clip(218, 93, 232, 26, 'url(#clip)'); clip(659, 93, 300, 26, 'url(#clip)');
  s += text(235, 117, 'Trem Gt', 'clabel') + text(268, 117, '-Bwd', 'clabel') + text(326, 117, 'Trem Gt', 'clabel');
  clip(311, 122, 139, 27, 'url(#clipDim)'); wave(311, 404, 131, 8); wave(350, 450, 142, 6);
  clip(395, 151, 55, 28, 'url(#clipDim)'); wave(395, 450, 161, 9); wave(395, 450, 168, 7);
  clip(357, 181, 93, 27, 'url(#clip)'); wave(372, 450, 193, 12); wave(372, 450, 196, 8);
  clip(357, 210, 93, 98, '#5f9fc6');
  [[122, 27], [151, 28], [181, 27], [210, 98]].forEach(([y, h]) => {
    [[450, 473], [478, 484], [489, 566], [570, 579], [588, 635]].forEach(([a, b]) => clip(a, y, b - a, h, '#0098e8'));
    clip(635, y, y == 122 || y == 181 ? 400 : 23, h, y == 181 ? 'url(#clip)' : 'url(#clipDim)');
    wave(489, 566, y + h * .4, h * .22); wave(489, 566, y + h * .65, h * .2); wave(588, 658, y + h * .4, h * .3); wave(450, 473, y + h * .5, h * .3);
  });
  // main waveform of the selected track
  s += '<path class="wv" d="M374 308V225L376 232 378 240 380 242 382 250 385 256 388 254 391 257 394 253 398 256 402 255 M375 292L378 278 381 276 384 262 388 267 391 263 395 268 400 263 403 266"/>';
  wave(404, 450, 246, 26); wave(404, 450, 272, 26);
  const mark = (xs, y, h) => xs.forEach(x => s += rect(x - (x > 450 && x < 635 ? 0 : 1), y, x > 450 && x < 635 ? 1 : 2, h, x > 450 && x < 635 ? '#84b65c' : '#efb428'));
  mark([264], 64, 26);
  mark([425, 443, 454, 460, 472, 512, 611, 628, 639, 646, 657], 122, 27);
  mark([408, 420, 426, 431, 437, 443, 454, 466, 494, 507, 512, 518, 529, 535, 547, 553, 559, 593, 599, 605, 611, 617, 628, 639, 652], 181, 27);
  mark([403, 408, 413, 419, 443, 460, 494, 529, 535, 547, 553, 593, 600, 628, 645], 210, 98);
  [[326, 146, 'Rh Guitar'], [419, 146, 'R'], [530, 146, 'Rh Guitar 0'], [606, 146, 'R'], [411, 176, 'Rh Guitar 02'], [505, 176, 'Rh Guitar 02'], [606, 176, 'Rh Guitar 02'], [373, 205, 'Ld Guita'], [373, 306, 'Ld Guita'], [436, 306, 'L'], [511, 306, 'Ld G'], [621, 306, 'L']].forEach(a => s += text(...a, 'clabel'));
  [[243, 85], [288, 85], [804, 85], [850, 85], [266, 114], [381, 114], [359, 143], [541, 143], [436, 173], [530, 173], [626, 173], [382, 202]].forEach(([x, y]) => s += `<circle cx="${x}" cy="${y}" r="3.200" fill="#e9eef2"/>` + line(`M${x} ${y - 2}v2h1.500`, '#456', 'stroke-width=".8"') + line(`M${x - 5} ${y - 4}l3 3`, '#16394f'));
  s += rect(379, 299, 5, 4, '#fff') + rect(512, 299, 4, 4, '#7fd0f5');
  for (let b = 17; b < 22; b++) { const x = Math.round(218 + (b - 17) * 46.4) + .5; s += line(`M${x} 64V119M${x} 210v98${b > 19 ? `M${x} 122v86` : ''}`, '#16222e', 'stroke-dasharray="2 2"'); }
  for (let b = 22; b < 27; b++) { const x = Math.round(218 + (b - 17) * 46.4) + .5; s += line(`M${x} 122V308`, '#064a78', 'stroke-dasharray="1 2"'); }
  s += line('M206 91.500h2000M206 120.500h2000M206 150.500h2000M206 180.500h2000', '#020304', 'stroke-width="2"');
  s += line('M206 259.500h2000M206 309.500h2000M206 346.500h2000M206 379.500h2000', '#1b2835');
  // automation curves
  const curve = (pts, c, c2, dots) => {
    const d = 'M' + pts.map(p => p.join(' ')).join('L');
    s += line(d, c, 'stroke-width="2" clip-path="url(#out)"') + line(d, c2, 'stroke-width="1" clip-path="url(#in)"');
    dots.forEach(([x, y]) => s += `<circle cx="${x}" cy="${y}" r="1.700" fill="#1d3040" stroke="${x > 450 && x < 635 ? c2 : c}"/>`);
  };
  s += '<clipPath id="out"><path d="M206 300h244v120H206zM635 300h900v120H635z"/></clipPath><clipPath id="in"><path d="M450 300h185v120H450z"/></clipPath>';
  const between = (pts, step) => { const o = []; for (let i = 1; i < pts.length; i++) { const [a, b] = [pts[i - 1], pts[i]], n = Math.max(1, Math.round((b[0] - a[0]) / step)); for (let k = 0; k < n; k++) o.push([a[0] + (b[0] - a[0]) * k / n, a[1] + (b[1] - a[1]) * k / n]); } o.push(pts[pts.length - 1]); return o; };
  const y = [[206, 322], [354, 322], [360, 320], [362, 324], [372, 326], [381, 325], [382, 331], [395, 334], [402, 329], [409, 325], [415, 325], [420, 331], [449, 329], [477, 325], [497, 325], [569, 318], [575, 318], [590, 325], [635, 325], [642, 324], [652, 320], [660, 313]];
  curve(y, '#e6dd1c', '#35d58a', [...between(y.slice(1, 12), 4), y[13], y[14], ...between(y.slice(15, 18), 4), ...between(y.slice(19), 3)]);
  const c = [[206, 374], [356, 373], [362, 370], [370, 358], [376, 354], [387, 354], [403, 360], [415, 366], [429, 372], [446, 372], [460, 366], [470, 357], [481, 348], [509, 348], [520, 353], [532, 364], [543, 376], [567, 377], [575, 374], [590, 362], [605, 352], [620, 348], [645, 348], [660, 353]];
  curve(c, '#1fd0d2', '#1fc4ef', [...between(c.slice(1, 9), 4), ...between(c.slice(9, 13), 4), ...between(c.slice(13, 17), 4), ...between(c.slice(17, 22), 5), ...between(c.slice(22), 4)]);
  const o = [[206, 382], [362, 382], [401, 401], [497, 401], [579, 399], [594, 382], [660, 396], [700, 400]];
  curve(o, '#dc7c5c', '#7d97ad', o.slice(1, 6));
  s += line('M605.500 60V406', '#8fa0ac') + '<path d="M602 58h6v3l-3 3-3-3z" fill="#0c9a86"/>';
  s += rect(206, 208, 2000, 2, '#b9bfc4') + rect(206, 405, 2000, 2, '#c9ced2');
  $('timeline').innerHTML = `<g transform="translate(-206 -28)">${s}</g>`;
})();

// Mixer
(() => {
  const slots = a => `<div class="slots">${[0, 1, 2, 3].map(i => `<select class="slot ${a[i] ? 'on' : ''}" aria-label="Insert ${i + 1}"><option>${a[i] || ''}</option></select>`).join('')}</div>`;
  const hd = (t, c = '') => `<div class="hd ${c}"><span>${t}</span><i></i></div>`;
  const flatEq = [['12k', 0, 0], ['5k', 0, 0], ['200', 0, 0], ['80', 0, 0]];
  const ch = [
    ['Fng Gt', 1, flatEq, 91, 50, 70, 80, '0.0', 'StMast', ''],
    ['Trem Gt', 2, flatEq, 91, 50, 70, 80, '0.0', 'StMast', ''],
    ['Rh Gt 1', 3, [['19.3k', '-2.3', -8], ['8.1k', '0.8', 5], ['175', '-6.6', -40], ['116', '-4.0', -30]], 91, 55, 70, 78, '-18.2', 'BUS RH', 'b'],
    ['Rh Gt 2', 4, [['17.0k', '-6.2', -38], ['12.0k', '1.7', 8], ['142', '-3.9', -28], ['82', '-4.8', -30]], -91, 82, 48, 48, '0.0', 'BUS RH', 'b']];
  let h = `<div class="strip"><div class="s-in">▸ In</div><div class="hd dk">&nbsp; ▸</div><div class="hd"><i class="tri"></i></div><div class="slots"><button class="power" aria-label="Power"></button></div><div class="hd"><i class="tri"></i></div><div></div><div></div><div></div><div></div><div></div><div></div><div></div><div class="side-lbl">Name</div><div class="side-lbl">Out</div></div>`;
  ch.forEach(([n, no, eq, pan, vol, m1, m2, val, out, oc], i) => {
    h += `<div class="strip"><div class="s-in"><select aria-label="Input"><option>2</option></select></div>${hd('AUX', i == 1 ? '' : 'dk')}${hd('Plug-ins')}${slots(['Vandal_SE'])}${hd('EQ')}
    <div class="eqs">${eq.map(([f, g, a]) => `<div class="eq"><div>${knob(a, 0)}</div><p><b>${f}</b>${g}</p></div>`).join('')}</div>
    <div class="panrow"><div class="pan">${knob(pan > 0 ? 130 : -130, 1)}</div><p>${pan}<i class="tri"></i></p></div>
    <div class="num"><span>${no}</span><span>●</span></div>
    <div class="duo"><button class="rd">Rd</button><button class="key">S</button></div>
    <div class="duo"><button class="key" aria-label="Record"><svg viewBox="0 0 10 8"><use href="#i-rec"/></svg></button><button class="key">M</button></div>
    <div class="fz"><input class="fader" type="range" value="${vol}" aria-label="${n} volume"><svg>${meter(m1, m2, 143, val, i == 3)}</svg></div>
    <div class="vga">VCA<b>FX ▾</b></div><div class="nm ${i > 1 ? 'd' : ''}">${n}</div><div class="out ${oc}">${out}</div></div>`;
  });
  let m = rect(0, 5, 29, 209, '#07090a') + rect(1, 24, 10, 177, '#30353a') + rect(18, 24, 10, 177, '#30353a');
  m += text(14, 14, '-0.1 -0.1', 'tw mid', 'style="font-size:6px"') + rect(1, 72, 10, 129, 'url(#level)') + rect(18, 72, 10, 129, 'url(#level)') + rect(1, 62, 27, 1, '#e0912b');
  for (let y = 26; y < 201; y += 3) m += rect(1, y, 10, 1, 'rgba(0,0,0,.3)') + rect(18, y, 10, 1, 'rgba(0,0,0,.3)');
  [[12, 29], [6, 40], [3, 59], [6, 78], [10, 91], [20, 121], [30, 140], [40, 165], [50, 190], [60, 203]].forEach(([l, y]) => m += text(14.5, y, l, 'tw mid', 'style="font-size:5px"'));
  m += text(14, 212, '0.0  0.0', 'tw mid', 'style="font-size:6px"');
  const sc = [[10, 4], [-10, 48], [-20, 71], [-40, 104], [-60, 136]].map(([l, y]) => text(4, y, l, 'tw mid', 'style="font-size:6px"')).join('');
  h += `<div class="strip master"><div></div><div></div>${hd('Master Plug-ins')}${slots(['EQ116', 'eFX_Compressor', 'eFX_Limiter'])}${hd('Master EQ')}
  <div class="eqs">${[['4.1k', '-0.1', 80], ['5.0k', 'MH', 80], ['1.0k', 'Mi', 20], ['301', 'Lo*', -15]].map(([f, g, a], i) => `<div class="eq"><div>${knob(0, 0, '#333')}</div><p class="l"><b>${f}</b>${g}</p><div class="pan">${knob(a, i < 2)}</div></div>`).join('')}</div>
  <div class="mbody"><div class="mleft"><div class="panrow"><div class="pan">${knob(0, 0, '#333')}</div><p>100<span class="tag">Stereo</span></p></div><div class="num mono"><span>Mono</span><span>N</span><i></i></div><div class="duo"><button class="rd">Rd</button><button class="key">S</button></div><div></div>
  <div class="mf"><input class="fader" type="range" value="90" aria-label="Master left"><svg>${sc}</svg><input class="fader" type="range" value="90" aria-label="Master right"></div></div><svg>${m}</svg></div>
  <div class="vga mr"><b>FX ▾</b><b>Mix to File</b><b>On</b></div><div class="mname">master</div><div class="out g">1 Stream 4 ... avi/ac</div></div>`;
  const t = x => `<button class="tag">${x}</button>`;
  h += `<div class="strip side"><div class="g2 top">${t('Setup')}${t('?')}</div><div></div><div class="hd ct">Resets</div><div class="g2 rs">${['Aux', 'EQ', 'Peaks', 'FX', 'Mono', 'Stereo'].map(t).join('')}</div><div class="hd ct">Snapshots</div>
  <div class="snaps">${[1, 2, 3, 4, 5, 6, 7, 8].map(n => `<label><input type="checkbox">${n}</label>`).join('')}</div>
  <div class="g2 fl"><button class="tag" aria-label="Open"><svg viewBox="0 0 8 8" width="100%" height="8"><use href="#i-folder"/></svg></button><button class="tag" aria-label="Save">▤</button></div><div></div>
  <div class="duo"><button class="key">S</button>${t('Bypass')}</div><div class="duo"><button class="key">M</button><label class="chk two"><input type="checkbox">Auto Rec</label></div>
  <div class="tools"><button class="play" aria-label="Play"><svg viewBox="0 0 10 10"><path d="M0 0l10 5-10 5z" fill="#e4e6e8"/></svg></button><div class="g2">${t('OO')}${t('O-O')}</div><label class="chk"><input type="checkbox">hide Tracks</label><label class="chk"><input type="checkbox">hide Master</label>
  <div class="g2 kn"><span>Solo</span><span>Monitor</span>${knob(0, 0, '#444')}${knob(0, 0, '#444')}<small>0.0</small><small>0.0</small></div></div>
  <div></div><button class="tag pfl">PFL</button><div class="out yl"></div></div>`;
  $('mixer').innerHTML = h;
})();

// Piano keyboard and notes
(() => {
  let k = rect(0, 0, 25, 71, '#24272b') + rect(0, 18, 25, 53, '#f4f5f6');
  [19, 34, 44, 55, 66].forEach(y => k += rect(0, y, 14, 4, '#000'));
  [27, 36, 46, 57, 67].forEach(y => k += rect(0, y, 25, 1, '#555'));
  $('keys').innerHTML = k + text(17, 25, 'C4', 'tdim', 'style="font-size:5px"');
  let s = rect(0, 0, 1200, 8, '#69727e') + rect(0, 8, 1200, 10, '#b6babf') + rect(0, 18, 1200, 53, '#b1b7be');
  for (let y = 18; y < 71; y += 10) s += rect(0, y, 1200, 5, '#a4aab2');
  s += rect(531, 18, 700, 53, '#3b3d40') + line('M0 8.500h1200M0 17.500h1200', '#3d434a') + rect(0, 70, 1200, 1, '#333');
  ['', '2', '3', '4', '50', '2', '3', '4', '51', '2', '3', '4', '52'].forEach((l, i) => {
    const x = Math.round(i * 44.1 - 10);
    if (i) s += line(`M${x + .5} 12v6`, '#222') + text(x + 3, 16, l, 'rl') + line(`M${x + .5} 18v53`, '#858d96');
    s += line(`M${x + 22.500} 14v4`, '#444');
  });
  [[0, 33, [25, 41, 67]], [78, 44, [25, 41, 67]], [166, 44, [25, 41, 67]], [210, 44, [30, 41, 56]], [299, 44, [30, 41, 56]], [387, 44, [30, 46, 61]]].forEach(([x, w, ys]) => ys.forEach(y => s += `<rect x="${x + .5}" y="${y - 2.5}" width="${w - 1}" height="5" fill="#3a7ce6" stroke="#14305f"/>`));
  s += rect(166, 14, 1, 57, '#2fd65a') + rect(35, 0, 1, 7, '#cc3340');
  $('notes').innerHTML = s;

  const grid = [35, 78, 122, 166, 210, 254, 299, 343, 387, 431, 475, 519];
  let c = '<linearGradient id="fade"><stop offset="0" stop-color="#0a62ff"/><stop offset=".27" stop-color="#86b6ff"/><stop offset=".38" stop-color="#0a62ff"/><stop offset=".48" stop-color="#86b6ff"/><stop offset=".7" stop-color="#4a8cff"/><stop offset="1" stop-color="#2a78ff"/></linearGradient><linearGradient id="pink" x1="0" y1="0" x2="0" y2="1"><stop offset="0" stop-color="#d4585a"/><stop offset="1" stop-color="#cc7478"/></linearGradient>';
  c += rect(0, 0, 1200, 56, '#b3b9bf');
  c += '<path d="M0 23Q18 14 27 13L35 14V56H0z" fill="#0a5cff"/><path d="M35 24C60 26 80 40 112 40S190 25 240 25H270V56H35z" fill="url(#pink)"/>';
  c += '<path d="M271 18C290 19 300 29 320 34S345 43 354 45C366 44 373 22 382 18 393 22 400 40 415 41 430 38 440 41 455 35S480 26 492 26H563V56H271z" fill="url(#fade)"/><path d="M271 18C290 19 300 29 320 34S345 43 354 45C366 44 373 22 382 18 393 22 400 40 415 41 430 38 440 41 455 35S480 26 492 26H1200" fill="none" stroke="#17468f"/>' + rect(563, 26, 700, 30, '#2a78ff');
  grid.forEach(x => c += rect(x, 1, 1, 55, '#3c5868'));
  c += line('M50 49H258M264 7v42', '#3f6ea8');
  c += line('M53 10l-6 3h6M149 10l3 3h-6zM252 10l6 3h-6M53 49l-6 1 4-4M252 49l6 1-4-4M152 25l-3 3v2l3 3 3-3v-2z', '#2d78b8', 'stroke-width="1.3"');
  c += text(3, 9, 'Aftertouch', 'rl') + line('M0 .500H1200M0 55.500H1200M.500 0V56', '#c0313c');
  $('curve').innerHTML = c;
})();

// Spectrum, level and correlation meters
(() => {
  let s = '';
  const top = [262, 190, 160, 160, 143, 153, 153, 150, 170, 183, 200, 196, 225, 247, 198, 192, 230, 182, 200, 160, 155, 222, 267, 235, 256, 297, 268, 250, 285, 330, 352, 308, 378, 355, 308, 360, 268, 338, 286, 303, 265, 307, 295, 333, 298, 278, 300, 328, 350, 372, 370, 352, 370, 408, 388, 390, 393, 420, 437, 470];
  [['9', 458], ['0', 476], ['-9', 494], ['-18', 512], ['-27', 530], ['-36', 548], ['-45', 566], ['-54', 584]].forEach(([l, y]) => s += text(619, y + 2, l, 'tdim end', 'style="font-size:6px"') + rect(622, y, 200, 1, '#0b0c0c'));
  top.forEach((t, i) => {
    const x = 618 + i * 3.18, y = 430 + t / 3;
    s += rect(x, Math.max(y, 494), 2.5, 595 - Math.max(y, 494), '#067806');
    if (y < 494) s += rect(x, y, 2.5, 494 - y, '#eba418');
    const p = y - 4 - (i > 44 ? 14 : rnd() * 8);
    if (i > 7) s += rect(x, p, 2.5, 1, p < 494 ? '#c98a12' : '#0d5c12');
  });
  s += rect(618, 594, 203, 1, '#067806');
  s += rect(631, 470, 3, 1, '#e33') + rect(634, 472, 9, 1, '#e33') + rect(621, 476, 8, 1, '#c98a12');
  ['39', '62', '88', '130', '193', '287', '425', '632', '939', '1.4k', '2.1k', '3.1k', '4.6k', '6.8k', '10.0k', '14.8k'].forEach((l, i) => s += `<text class="tw" style="font-size:6px" transform="translate(${618 + i * 12.7} 594) rotate(-90)" y="4">${l}</text>`);
  // level bars
  const scale = [853, 865, 886, 903, 925, 951, 981, 1011, 1043, 1075, 1108, 1141, 1168];
  [[453, 460, 'L', 0], [493, 482, 'R', 1]].forEach(([t, b, l, r]) => {
    s += text(843, r ? 492 : 465, l, 'tw', 'style="font-size:6px"') + rect(853, t, 196, 5, '#087208') + rect(1049, t, r ? 34 : 31, 5, '#f0a81c') + rect(853, b, 164, 10, '#065c06') + rect(1017, b, r ? 17 : 19, 10, '#e09a10');
    const e = r ? t + 5 : t - 1;
    s += rect(1080, e, 29, 1, '#8a5c10') + rect(1109, e, 60, 1, '#a01c24');
    for (let x = 985; x < 1168; x += 6) s += rect(x, r ? t + 2 : t, 1, 2, '#9a9d9f');
    scale.forEach(x => s += rect(x, Math.min(t, b), 1, r ? 16 : 8, x > 1000 && x < 1160 ? '#666' : '#9fb59f'));
    s += rect(r ? 1106 : 1108, Math.min(t, b), 1, 15, '#e09a10');
  });
  ['-70', '-50', '-40', '-35', '-30', '-25', '-20', '-15', '-10', '-5', '0', '5', '9'].forEach((l, i) => s += text(scale[i], 478, l, (i && i < 12 ? 'tw' : 'tdim') + ' mid', 'style="font-size:6px"'));
  [['-0.1', 461], ['-11.4', 471], ['-11.5', 490], ['-0.1', 499]].forEach(([l, y]) => s += text(1195, y, l, 'tw end', 'style="font-size:8px;font-weight:600"'));
  // correlation
  [865, 916, 967, 1018, 1070].forEach((x, i) => s += rect(x, 545, 1, 43, '#3a3c3e') + text(x + 2, 596, ['180°', '135°', '90°', '45°', '0°'][i], 'tw mid', 'style="font-size:6px"'));
  s += rect(865, 588, 206, 1, '#b5b7b9') + '<linearGradient id="corr"><stop offset="0" stop-color="#777"/><stop offset=".6" stop-color="#fff"/></linearGradient>' + rect(1014, 542, 9, 46, 'url(#corr)') + text(856, 572, '-1') + text(1072, 572, '+1');
  s += text(1195, 520, 'TPmax in dBTP', 'tw end', 'style="font-size:6px"') + text(1107, 538, '11', '', 'style="font-size:11px" fill="#eba81c"') + text(1122, 538, '.2', '', 'fill="#eba81c"') + text(1195, 537, '0.1', 'end', 'fill="#e0303a"');
  s += text(1195, 558, 'Meas Time', 'tw end', 'style="font-size:6px"') + text(1195, 574, '00:00:14', 'tw end') + text(1114, 575, '0', '', 'style="font-size:11px" fill="#0c8a18"') + text(1122, 575, '.1', '', 'fill="#0c8a18"');
  s += rect(1131, 518, 1, 66, '#3c3e40') + rect(1105, 546, 21, 1, '#4c4e50') + rect(1136, 546, 59, 1, '#4c4e50') + rect(1105, 588, 90, 1, '#4c4e50');
  [1121, 1130, 1140].forEach((x, i) => s += `<rect x="${x - 3}" y="593" width="6" height="6" rx="2" fill="${i == 1 ? '#eee' : 'none'}" stroke="#bbb"/><circle cx="${x}" cy="596" r="1" fill="#999"/>`);
  s += text(1187, 600, 'Gate', 'tw end', 'style="font-size:6px"');
  $('scope').innerHTML = s;
})();

// Plug-in tree
$('plugins').innerHTML = ['Dynamics', 'EQ', 'Filter', 'Delay', '-Reverb', '*Room Simulation...', '*eFX_Reverb', '*VariVerb Pro', 'Distortion', 'Restoration', 'Spatial', 'Modulation', 'Mastering', 'Guitar', 'Other', 'Analyzer'].map(n => {
  if (n[0] != '*') return `<li><i>${n[0] == '-' ? '◢' : '›'}</i><svg><use href="#i-folder"/></svg>${n.replace('-', '')}</li>`;
  const room = n[1] == 'R';
  return `<li class="fx ${n[1] == 'V' ? 'sel' : ''}"><b>FX</b>${n.slice(1)}<span class="stars">${room ? '' : '<em>Y</em><em>◢6</em>'}<svg fill="${room ? '#fff' : '#f3d51c'}" ${room ? '' : 'stroke="#8a7a10"'}><use href="#i-star"/></svg></span></li>`;
}).join('');
```
